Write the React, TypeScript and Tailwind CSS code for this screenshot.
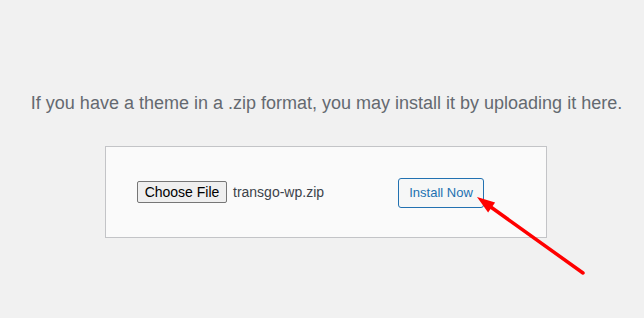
export default function App() {
  return (
    <div className="relative w-[644px] h-[318px] bg-[#f1f1f1] overflow-hidden" style={{ fontFamily: '"Liberation Sans", Arial, sans-serif' }}>
      <div className="pt-[91px] pl-[9px] text-center">
        <p className="text-[18px] leading-[24px] text-[#646970]" style={{ fontFamily: '"Liberation Sans", Arial, sans-serif' }}>
          If you have a theme in a .zip format, you may install it by uploading it here.
        </p>
      </div>
      <div className="ml-[105px] mt-[31px] w-[442px] h-[92px] border border-[#c3c4c7] bg-[#fafafa] flex items-center pl-[31px]">
        <div className="w-[261px] flex items-center">
          <button className="h-[22px] w-[90px] border border-[#767676] rounded-[2px] bg-[#efefef] text-[14px] text-black leading-none flex items-center justify-center">
            Choose File
          </button>
          <span className="ml-[6px] text-[14px] text-[#3c434a]">transgo-wp.zip</span>
        </div>
        <button className="h-[30px] w-[86px] border border-[#2271b1] rounded-[3px] bg-[#f6f7f7] text-[13px] text-[#2271b1] flex items-center justify-center mt-[1px]">
          Install Now
        </button>
      </div>
      <svg className="absolute left-0 top-0" width="644" height="318" viewBox="0 0 644 318">
        <line x1="583" y1="273" x2="488" y2="205" stroke="#ff0000" strokeWidth="3.5" strokeLinecap="round" />
        <polygon points="477,197 495.1,202.6 488.1,212.4" fill="#ff0000" />
      </svg>
    </div>
  );
}
